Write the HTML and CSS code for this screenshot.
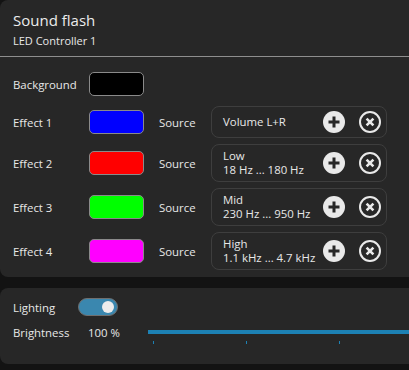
FILE: index.html
```html
<!DOCTYPE html>
<html lang="en">
<head>
  <meta charset="UTF-8">
  <title>Sound flash</title>
  <link rel="stylesheet" href="styles.css">
</head>
<body>

  <div class="panel main">
    <header class="head">
      <h1>Sound flash</h1>
      <p>LED Controller 1</p>
    </header>

    <div class="effects">
      <span class="label">Background</span>
      <span class="swatch" style="background:#000000"></span>
      <span></span>
      <span class="spacer"></span>

      <span class="label">Effect 1</span>
      <span class="swatch" style="background:#0000ff"></span>
      <span class="label">Source</span>
      <div class="source one">
        <div class="src-text">Volume L+R</div>
        <svg class="ico" viewBox="0 0 22 22"><circle cx="11" cy="11" r="11" fill="#e9e9e9"/><path d="M11 5.5v11M5.5 11h11" stroke="#272727" stroke-width="3"/></svg>
        <svg class="ico" viewBox="0 0 22 22"><circle cx="11" cy="11" r="10" fill="none" stroke="#e9e9e9" stroke-width="2"/><path d="M7.6 7.6l6.8 6.8M14.4 7.6l-6.8 6.8" stroke="#e9e9e9" stroke-width="2.6"/></svg>
      </div>

      <span class="label">Effect 2</span>
      <span class="swatch" style="background:#ff0000"></span>
      <span class="label">Source</span>
      <div class="source">
        <div class="src-text">Low<br>18 Hz ... 180 Hz</div>
        <svg class="ico" viewBox="0 0 22 22"><circle cx="11" cy="11" r="11" fill="#e9e9e9"/><path d="M11 5.5v11M5.5 11h11" stroke="#272727" stroke-width="3"/></svg>
        <svg class="ico" viewBox="0 0 22 22"><circle cx="11" cy="11" r="10" fill="none" stroke="#e9e9e9" stroke-width="2"/><path d="M7.6 7.6l6.8 6.8M14.4 7.6l-6.8 6.8" stroke="#e9e9e9" stroke-width="2.6"/></svg>
      </div>

      <span class="label">Effect 3</span>
      <span class="swatch" style="background:#00ff00"></span>
      <span class="label">Source</span>
      <div class="source">
        <div class="src-text">Mid<br>230 Hz ... 950 Hz</div>
        <svg class="ico" viewBox="0 0 22 22"><circle cx="11" cy="11" r="11" fill="#e9e9e9"/><path d="M11 5.5v11M5.5 11h11" stroke="#272727" stroke-width="3"/></svg>
        <svg class="ico" viewBox="0 0 22 22"><circle cx="11" cy="11" r="10" fill="none" stroke="#e9e9e9" stroke-width="2"/><path d="M7.6 7.6l6.8 6.8M14.4 7.6l-6.8 6.8" stroke="#e9e9e9" stroke-width="2.6"/></svg>
      </div>

      <span class="label">Effect 4</span>
      <span class="swatch" style="background:#ff00ff"></span>
      <span class="label">Source</span>
      <div class="source">
        <div class="src-text">High<br>1.1 kHz ... 4.7 kHz</div>
        <svg class="ico" viewBox="0 0 22 22"><circle cx="11" cy="11" r="11" fill="#e9e9e9"/><path d="M11 5.5v11M5.5 11h11" stroke="#272727" stroke-width="3"/></svg>
        <svg class="ico" viewBox="0 0 22 22"><circle cx="11" cy="11" r="10" fill="none" stroke="#e9e9e9" stroke-width="2"/><path d="M7.6 7.6l6.8 6.8M14.4 7.6l-6.8 6.8" stroke="#e9e9e9" stroke-width="2.6"/></svg>
      </div>
    </div>
  </div>

  <div class="panel light">
    <div class="light-row">
      <span class="label light-label">Lighting</span>
      <span class="toggle"><span class="knob"></span></span>
    </div>
    <div class="bright-row">
      <span class="label bright-label">Brightness</span>
      <span class="label bright-value">100 %</span>
      <div class="slider">
        <div class="track"></div>
        <div class="ticks"><i></i><i></i><i></i></div>
      </div>
    </div>
  </div>

</body>
</html>
```

FILE: styles.css
```css
body {
  margin: 0;
  background-color: #131313;
  color: #e8e8e8;
  font-family: "Open Sans", "Noto Sans", sans-serif;
  font-size: 11.4px;
  overflow: hidden;
}

.panel {
  background-color: #272727;
  border-radius: 8px 0 0 8px;
}

.head {
  padding: 7px 13px 0;
  height: 49px;
  border-bottom: 1px solid #8e8e8e;
}

.head h1 {
  margin: 0;
  font-size: 15px;
  font-weight: normal;
  line-height: 26px;
  color: #ececec;
}

.head p {
  margin: 0;
  font-size: 11px;
  line-height: 16px;
}

.effects {
  display: grid;
  grid-template-columns: 76px 70px 52px 176px;
  grid-template-rows: 32px 32px 38px 38px 38px;
  row-gap: 6px;
  align-items: center;
  padding: 11px 0 7px 13px;
}

.label {
  white-space: nowrap;
}

.swatch {
  width: 53px;
  height: 22px;
  border: 1px solid #8a8a8a;
  border-radius: 5px;
}

.source {
  box-sizing: border-box;
  width: 176px;
  height: 38px;
  display: flex;
  align-items: center;
  gap: 14px;
  padding: 0 5px 0 11px;
  border: 1px solid #3e3e3e;
  border-radius: 8px;
}

.source.one {
  height: 32px;
}

.src-text {
  flex: 1;
  min-width: 0;
  line-height: 14.5px;
  white-space: nowrap;
}

.ico {
  width: 22px;
  height: 22px;
  flex: none;
}

.light {
  margin-top: 11px;
  height: 76px;
  box-sizing: border-box;
  padding: 10px 0 0 13px;
}

.light-row {
  display: flex;
  align-items: center;
  height: 18px;
}

.light-label {
  width: 65px;
  flex: none;
}

.toggle {
  box-sizing: border-box;
  width: 40px;
  height: 18px;
  border: 1px solid #6f6f6f;
  border-radius: 9px;
  background-color: #3a87af;
  display: flex;
  justify-content: flex-end;
  align-items: center;
  padding-right: 3px;
}

.knob {
  width: 12px;
  height: 12px;
  border-radius: 50%;
  background-color: #ececec;
}

.bright-row {
  display: flex;
  align-items: flex-start;
  margin-top: 8px;
}

.bright-row .label {
  line-height: 18px;
}

.bright-label {
  width: 75px;
  flex: none;
}

.bright-value {
  width: 60px;
  flex: none;
}

.slider {
  flex: 1;
  min-width: 0;
  padding-top: 6px;
}

.track {
  height: 4px;
  background-color: #1d81b4;
}

.ticks {
  display: flex;
  gap: 92px;
  padding-left: 5px;
  margin-top: 7px;
}

.ticks i {
  width: 1px;
  height: 3px;
  background-color: #1d81b4;
}
```
